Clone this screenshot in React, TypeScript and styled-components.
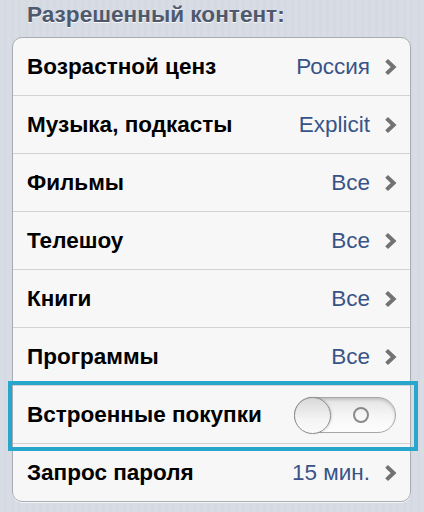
import styled, { createGlobalStyle } from "styled-components";

const GlobalStyle = createGlobalStyle`
  html, body {
    margin: 0;
    padding: 0;
  }
  body {
    width: 424px;
    height: 512px;
    overflow: hidden;
    font-family: "Liberation Sans", Arial, sans-serif;
    background-color: #d5d9e2;
    background-image: repeating-linear-gradient(
      90deg,
      rgba(255, 255, 255, 0.08) 0px,
      rgba(255, 255, 255, 0.08) 4px,
      rgba(0, 0, 0, 0) 4px,
      rgba(0, 0, 0, 0) 7px
    );
  }
`;

type Item = {
  label: string;
  value?: string;
  toggle?: boolean;
};

const items: Item[] = [
  { label: "Возрастной ценз", value: "Россия" },
  { label: "Музыка, подкасты", value: "Explicit" },
  { label: "Фильмы", value: "Все" },
  { label: "Телешоу", value: "Все" },
  { label: "Книги", value: "Все" },
  { label: "Программы", value: "Все" },
  { label: "Встроенные покупки", toggle: true },
  { label: "Запрос пароля", value: "15 мин." },
];

export default function App() {
  return (
    <>
      <GlobalStyle />
      <SPage>
        <SSectionTitle>Разрешенный контент:</SSectionTitle>
        <SCard>
          {items.map((item, i) => (
            <SRow key={item.label} $last={i === items.length - 1} $highlight={!!item.toggle}>
              <SLabel>{item.label}</SLabel>
              {item.toggle ? (
                <SSwitch>
                  <SKnob />
                  <SRing />
                </SSwitch>
              ) : (
                <SValueWrap>
                  <SValue>{item.value}</SValue>
                  <Chevron />
                </SValueWrap>
              )}
            </SRow>
          ))}
        </SCard>
      </SPage>
    </>
  );
}

function Chevron() {
  return (
    <svg width="13" height="18" viewBox="0 0 13 18">
      <path d="M2.6 2.4 L9.6 9 L2.6 15.6" fill="none" stroke="#727272" strokeWidth="4" strokeLinecap="butt" strokeLinejoin="miter" />
    </svg>
  );
}

const SPage = styled.div`
  padding: 0 13px 0 12px;
`;

const SSectionTitle = styled.h2`
  margin: 0;
  height: 37px;
  padding: 2px 0 0 15px;
  box-sizing: border-box;
  font-size: 22.6px;
  font-weight: bold;
  color: #4f596d;
  text-shadow: 0 1px 0 rgba(255, 255, 255, 0.9);
  line-height: 26px;
`;

const SCard = styled.div`
  background: #f7f7f7;
  border: 1px solid #a9acb2;
  border-radius: 10px;
  box-shadow: 0 1px 0 rgba(255, 255, 255, 0.7);
`;

const SRow = styled.div<{ $last: boolean; $highlight: boolean }>`
  position: relative;
  height: 57px;
  display: flex;
  align-items: center;
  justify-content: space-between;
  padding: 0 13px 0 14px;
  border-bottom: ${(p) => (p.$last ? "none" : "1px solid #d2d2d4")};

  ${(p) =>
    p.$highlight &&
    `
    &::after {
      content: "";
      position: absolute;
      left: -5px;
      right: -8px;
      top: -5px;
      bottom: -8px;
      border: 4px solid #29a6cb;
      pointer-events: none;
    }
  `}
`;

const SLabel = styled.span`
  font-size: 22.5px;
  font-weight: bold;
  color: #000;
`;

const SValueWrap = styled.span`
  display: flex;
  align-items: center;
  gap: 14px;
`;

const SValue = styled.span`
  font-size: 22.5px;
  color: #385487;
`;

const SSwitch = styled.div`
  position: relative;
  width: 100px;
  height: 34px;
  border: 1px solid #a6a6a6;
  border-radius: 18px;
  background: linear-gradient(#e3e3e3, #f7f7f7 55%, #fdfdfd);
  box-shadow: inset 0 2px 3px rgba(0, 0, 0, 0.15);
  display: flex;
  align-items: center;
  margin-right: 1px;
`;

const SKnob = styled.div`
  position: absolute;
  left: -1px;
  top: -1px;
  width: 35px;
  height: 35px;
  border-radius: 50%;
  border: 1px solid #8f8f8f;
  background: linear-gradient(#d8d8d8, #f4f4f4 60%, #fafafa);
  box-shadow: 1px 0 2px rgba(0, 0, 0, 0.15);
`;

const SRing = styled.div`
  position: absolute;
  left: 58px;
  top: 9px;
  width: 12px;
  height: 12px;
  border: 2.5px solid #8a8a8a;
  border-radius: 50%;
`;
